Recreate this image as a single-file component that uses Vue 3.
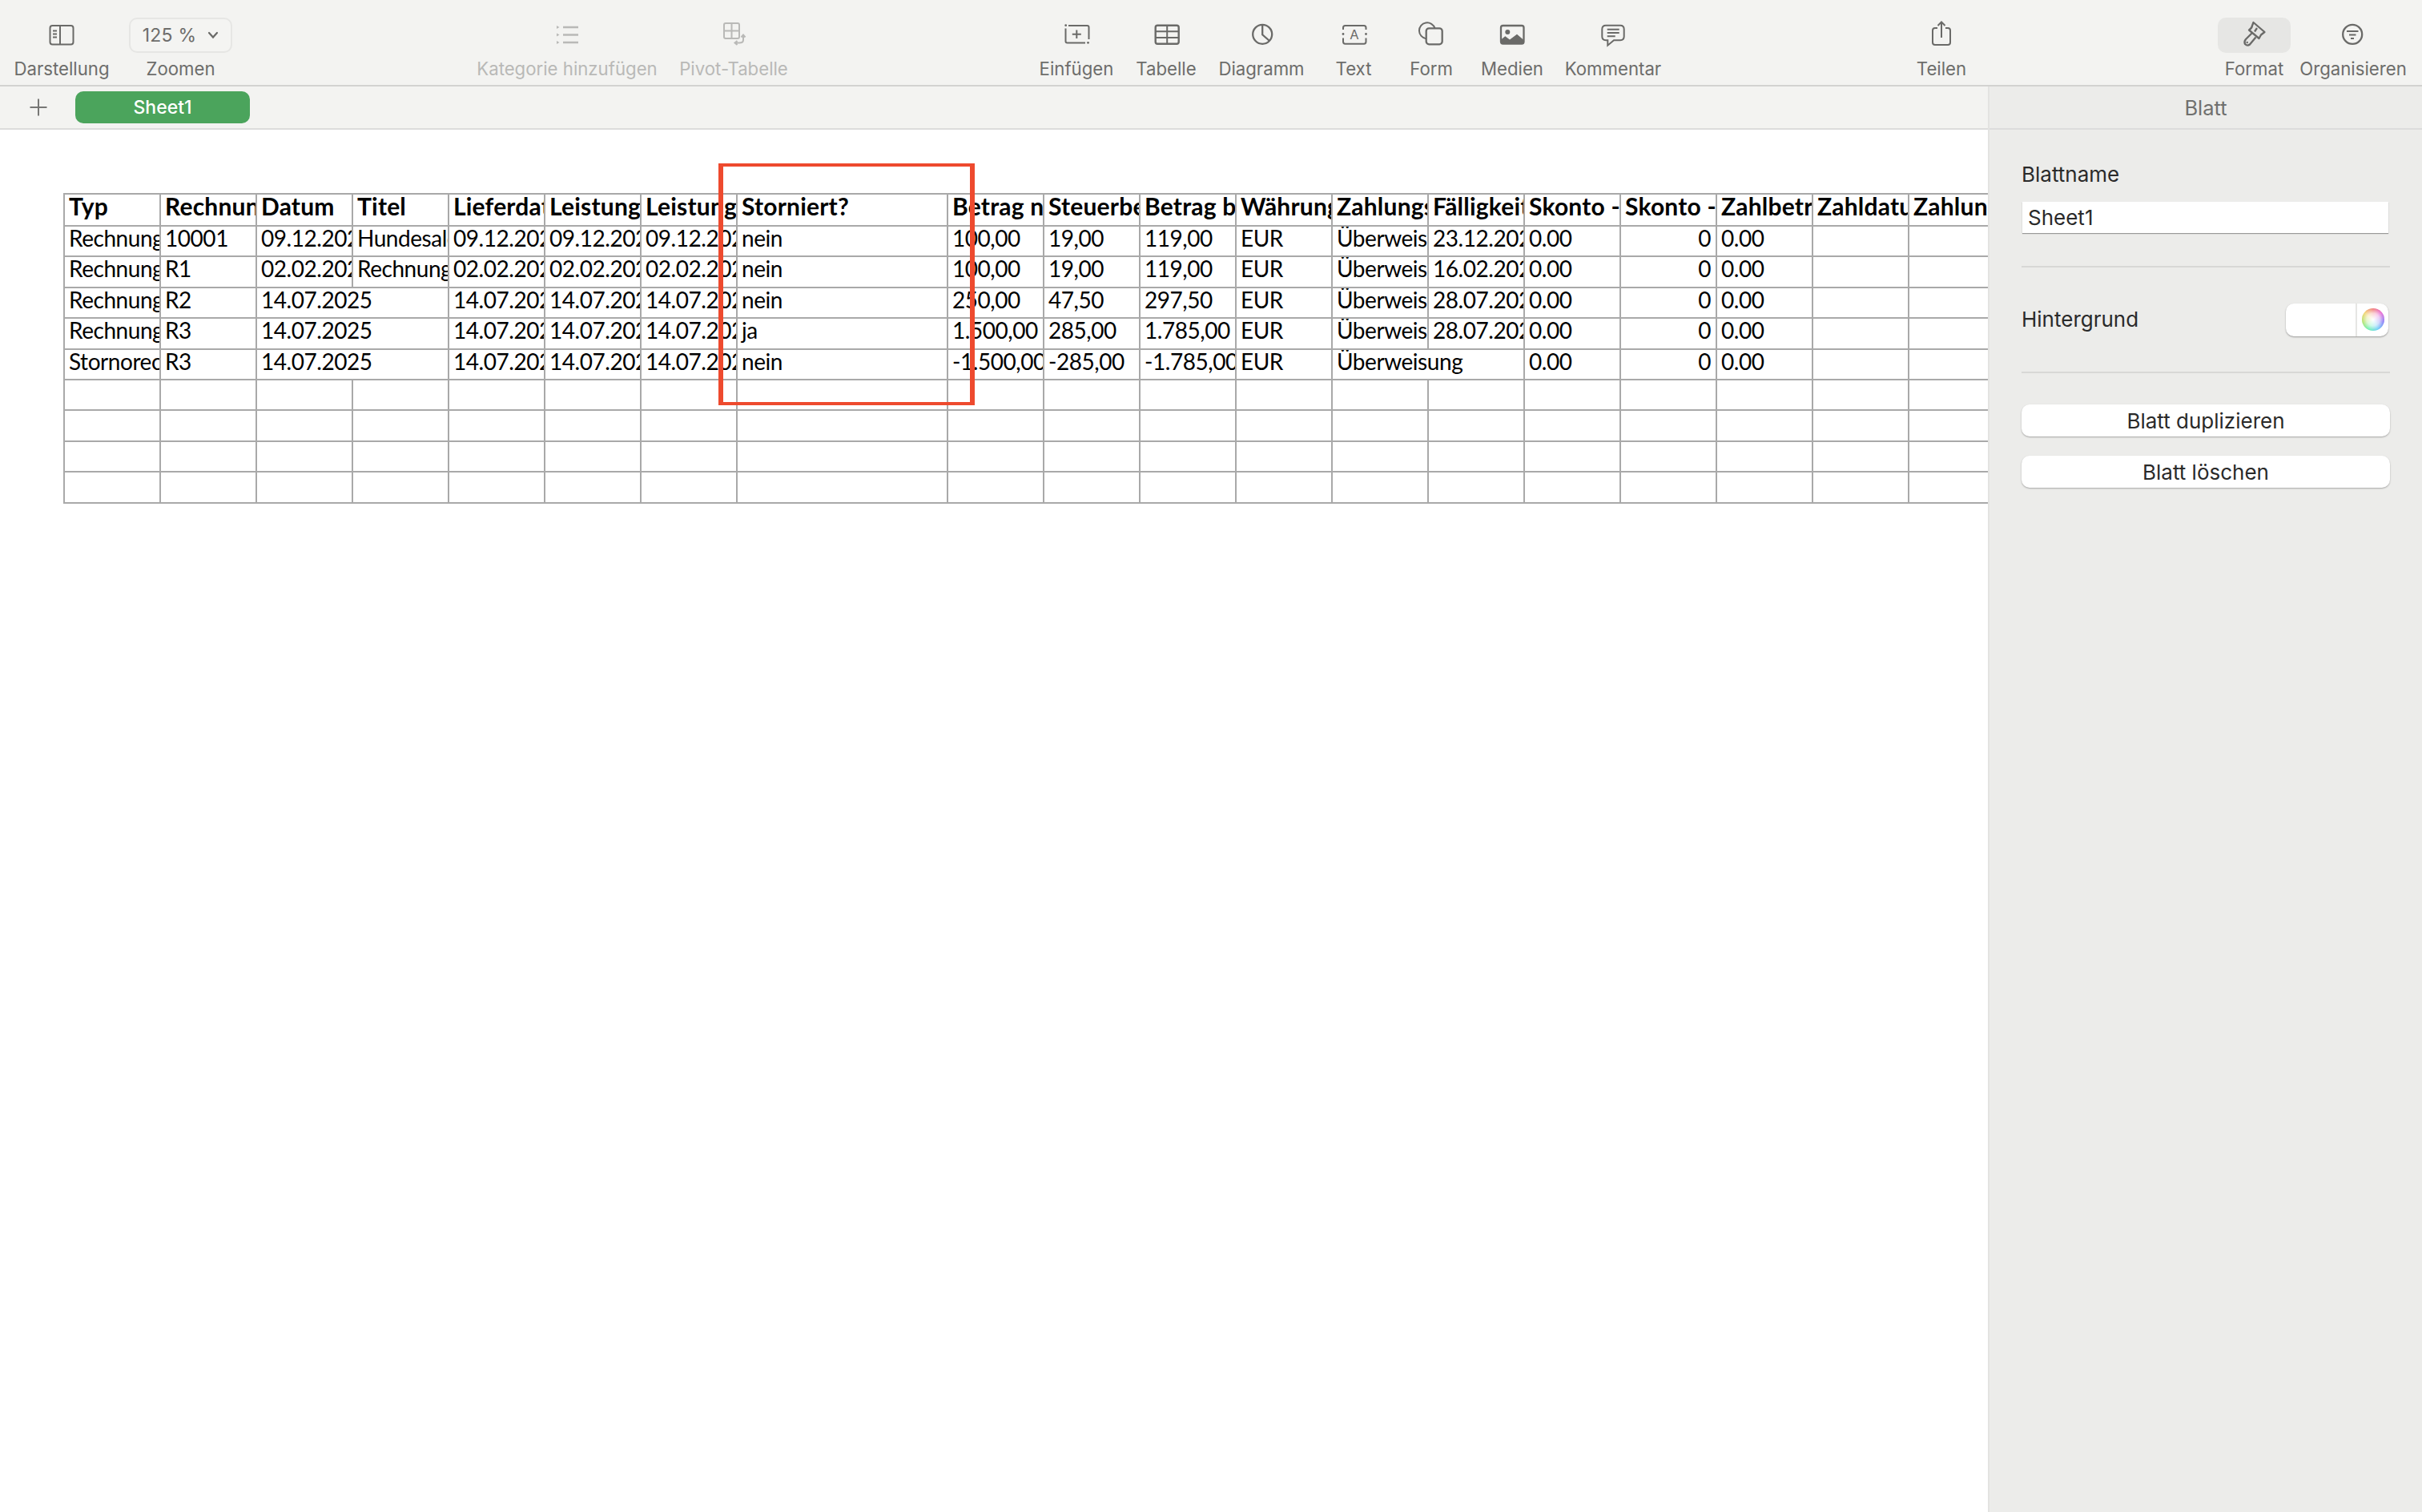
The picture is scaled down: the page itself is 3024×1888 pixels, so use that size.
<script setup>
/* TOOLBAR */

const leftGroup = [
  { label: "Darstellung", icon: "view", width: 118 },
  { label: "Zoomen", zoom: true, width: 129 },
];
const middleGroup = [
  { label: "Kategorie hinzufügen", icon: "category", width: 224, dim: true },
  { label: "Pivot-Tabelle", icon: "pivot", width: 192, dim: true },
];
const insertGroup = [
  { label: "Einfügen", icon: "insert", width: 120 },
  { label: "Tabelle", icon: "table", width: 104 },
  { label: "Diagramm", icon: "chart", width: 134 },
  { label: "Text", icon: "text", width: 96 },
  { label: "Form", icon: "shape", width: 98 },
  { label: "Medien", icon: "media", width: 104 },
  { label: "Kommentar", icon: "comment", width: 148 },
];
const shareGroup = [{ label: "Teilen", icon: "share", width: 120 }];
const rightGroup = [
  { label: "Format", icon: "format", width: 91, active: true },
  { label: "Organisieren", icon: "organize", width: 156 },
];

/* SHEET */

const header = [
  "Typ", "Rechnungsnummer", "Datum", "Titel", "Lieferdatum", "Leistungszeitraum",
  "Leistungszeitraum", "Storniert?", "Betrag netto", "Steuerbetrag", "Betrag brutto",
  "Währung", "Zahlungsart", "Fälligkeit", "Skonto - Prozent", "Skonto - Betrag",
  "Zahlbetrag", "Zahldatum", "Zahlungsstatus",
];

// null = the text of the cell before runs over this one
const data = [
  ["Rechnung", "10001", "09.12.2025", "Hundesalon", "09.12.2025", "09.12.2025", "09.12.2025", "nein", "100,00", "19,00", "119,00", "EUR", "Überweisung", "23.12.2025", "0.00", "0", "0.00", "", ""],
  ["Rechnung", "R1", "02.02.2025", "Rechnung", "02.02.2025", "02.02.2025", "02.02.2025", "nein", "100,00", "19,00", "119,00", "EUR", "Überweisung", "16.02.2025", "0.00", "0", "0.00", "", ""],
  ["Rechnung", "R2", "14.07.2025", null, "14.07.2025", "14.07.2025", "14.07.2025", "nein", "250,00", "47,50", "297,50", "EUR", "Überweisung", "28.07.2025", "0.00", "0", "0.00", "", ""],
  ["Rechnung", "R3", "14.07.2025", null, "14.07.2025", "14.07.2025", "14.07.2025", "ja", "1.500,00", "285,00", "1.785,00", "EUR", "Überweisung", "28.07.2025", "0.00", "0", "0.00", "", ""],
  ["Stornorechnung", "R3", "14.07.2025", null, "14.07.2025", "14.07.2025", "14.07.2025", "nein", "-1.500,00", "-285,00", "-1.785,00", "EUR", "Überweisung", null, "0.00", "0", "0.00", "", ""],
];

const emptyRow = Array(19).fill("");

function toCells(row) {
  return row
    .map((text, i) => ({ text, wide: row[i + 1] === null, right: i === 15 }))
    .filter((cell) => cell.text !== null);
}

const rows = [...data, emptyRow, emptyRow, emptyRow, emptyRow].map(toCells);
</script>

<template>
  <div class="app">
    <header class="toolbar">
      <div
        v-for="(group, g) in [leftGroup, middleGroup, insertGroup, shareGroup, rightGroup]"
        :key="g"
        class="group"
        :class="'group' + g"
      >
        <div
          v-for="item in group"
          :key="item.label"
          class="tool"
          :class="{ dim: item.dim }"
          :style="{ width: item.width + 'px' }"
        >
          <button v-if="item.zoom" class="zoomButton">
            125 %
            <svg width="14" height="10" viewBox="0 0 14 10" fill="none">
              <path d="M2 2L7 7.500L12 2" stroke="#6a6a68" stroke-width="2.200" stroke-linecap="round" />
            </svg>
          </button>
          <div v-else class="slot" :class="{ active: item.active }">
            <svg class="icon" width="44" height="44" viewBox="0 0 44 44" fill="none">
              <g v-if="item.icon === 'view'">
                <rect x="7.500" y="10" width="29" height="23.500" rx="3" />
                <path d="M20 10V33.500M11 16.500h5M11 20.500h5M11 24.500h5" />
              </g>
              <g v-else-if="item.icon === 'category'">
                <path d="M17 12H36M17 21.500H36M17 31H36" stroke-width="2.400" />
                <path d="M9 10l3.500 2L9 14zM9 19.500l3.500 2L9 23.500zM9 29l3.500 2L9 33z" class="solid" />
              </g>
              <g v-else-if="item.icon === 'pivot'">
                <rect x="10" y="7" width="19" height="19" rx="2" />
                <path d="M19.500 7V26M10 16.500H29" />
                <path d="M34 23V28Q34 31.500 29 31.500H24M31.500 24.500L34 21.500L36.500 24.500M26.500 29L23.500 31.500L26.500 34" />
              </g>
              <g v-else-if="item.icon === 'insert'">
                <path d="M12 10H35.500Q37.500 10 37.500 12V27M8.500 13.500V29.500Q8.500 31.500 10.500 31.500H33" />
                <circle cx="8.700" cy="9.700" r="1.400" class="solid" />
                <circle cx="36.500" cy="31.300" r="1.400" class="solid" />
                <path d="M22.300 15.500V26M16.800 20.700H27.800" />
              </g>
              <g v-else-if="item.icon === 'table'">
                <rect x="8.700" y="9.700" width="29" height="23" rx="2.500" stroke-width="2.400" />
                <path d="M8.700 17.300H37.700M8.700 25H37.700M23.200 9.700V32.700" />
              </g>
              <g v-else-if="item.icon === 'chart'">
                <circle cx="23.200" cy="20.800" r="12" stroke-width="2.300" />
                <path d="M23.200 9V21.300L32 29" stroke-width="2.300" />
              </g>
              <g v-else-if="item.icon === 'text'">
                <path d="M9 15V12.500Q9 10 11.500 10H35Q37.500 10 37.500 12.500V15M9 25.500V30Q9 32.700 11.500 32.700H35Q37.500 32.700 37.500 30V25.500" />
                <circle cx="9" cy="20.500" r="1.400" class="solid" />
                <circle cx="37.500" cy="20.500" r="1.400" class="solid" />
                <text x="23" y="27.300" class="iconLetter">A</text>
              </g>
              <g v-else-if="item.icon === 'shape'">
                <path d="M15.700 26.200A10 10 0 1 1 26.500 13.300" />
                <rect x="15.700" y="13.300" width="20" height="20" rx="3.500" stroke-width="2.300" />
              </g>
              <g v-else-if="item.icon === 'media'">
                <rect x="8" y="10" width="28.500" height="22.500" rx="2.500" stroke-width="2.300" />
                <path d="M8 32.500V27.500L13.300 23.300L19 27.500L28 20.700L36.500 28V32.500Z" class="solid" />
                <circle cx="16.300" cy="18" r="3" class="solid" />
              </g>
              <g v-else-if="item.icon === 'comment'">
                <path d="M13 9.700H31Q35.700 9.700 35.700 14.400V23.600Q35.700 28.300 31 28.300H23L15.300 34.700V28.300H13Q8.300 28.300 8.300 23.600V14.400Q8.300 9.700 13 9.700Z" />
                <path d="M14.700 14.700H29.700M14.700 19H29.700M14.700 23.300H24.700" />
              </g>
              <g v-else-if="item.icon === 'share'">
                <path d="M17 13H14Q11 13 11 16V31Q11 34 14 34H30Q33 34 33 31V16Q33 13 30 13H27" />
                <path d="M22 25V6M17.500 10L22 5.500L26.500 10" />
              </g>
              <g v-else-if="item.icon === 'format'" stroke-linejoin="round">
                <path d="M20.500 6L34.500 18L30 21.500L27.500 26L15 15.500Q18.500 13.500 19 10Z" stroke-width="2.300" />
                <path d="M25 13L22 17.500" stroke-width="2.300" />
                <path d="M19 19L11 27Q8.500 30 10 33Q13 36 16 33.500L23.500 24.500" stroke-width="2.300" />
                <circle cx="12.700" cy="31" r="1.200" class="solid" />
              </g>
              <g v-else-if="item.icon === 'organize'">
                <circle cx="21.200" cy="20.900" r="12" stroke-width="2.300" />
                <path d="M14 17H28.500M17 21.500H25.500M19 26H23" />
              </g>
            </svg>
          </div>
          <span class="toolLabel">{{ item.label }}</span>
        </div>
      </div>
    </header>

    <div class="body">
      <main class="content">
        <div class="tabBar">
          <button class="addSheet">
            <svg width="24" height="24" viewBox="0 0 24 24" fill="none">
              <path d="M12 1.500V22.500M1.500 12H22.500" stroke="#777775" stroke-width="2" />
            </svg>
          </button>
          <div class="tab">Sheet1</div>
        </div>

        <div class="canvas">
          <div class="sheet">
            <div v-for="(title, h) in header" :key="h" class="cell head">{{ title }}</div>
            <template v-for="(row, r) in rows" :key="r">
              <div
                v-for="(cell, c) in row"
                :key="c"
                class="cell"
                :class="{ wide: cell.wide, right: cell.right }"
              >{{ cell.text }}</div>
            </template>
          </div>
          <div class="marker"></div>
        </div>
      </main>

      <aside class="panel">
        <div class="panelTitle">Blatt</div>
        <div class="panelBody">
          <label class="fieldLabel">Blattname</label>
          <div class="nameInput">Sheet1</div>
          <div class="divider firstDivider"></div>
          <div class="bgRow">
            <span class="fieldLabel">Hintergrund</span>
            <div class="colorWell">
              <div class="swatch"></div>
              <div class="wheelBox"><div class="wheel"></div></div>
            </div>
          </div>
          <div class="divider"></div>
          <button class="panelButton">Blatt duplizieren</button>
          <button class="panelButton">Blatt löschen</button>
        </div>
      </aside>
    </div>
  </div>
</template>

<style>
html,
body {
  margin: 0;
  overflow: hidden;
  background: #fff;
}
</style>

<style scoped>
.app {
  width: 3024px;
  height: 1888px;
  display: flex;
  flex-direction: column;
  font-family: Inter, "Liberation Sans", sans-serif;
  overflow: hidden;
}

/* TOOLBAR */

.toolbar {
  flex: none;
  height: 108px;
  box-sizing: border-box;
  padding: 22px 8px 0 18px;
  display: flex;
  background: #f3f3f1;
  border-bottom: 2px solid #d2d2d0;
}

.group {
  display: flex;
}

.group0 {
  gap: 25px;
}

.group1 {
  margin-left: 306px;
}

.group2 {
  margin-left: 272px;
}

.group3 {
  margin-left: 276px;
}

.group4 {
  margin-left: 285px;
}

.tool {
  display: flex;
  flex-direction: column;
  align-items: center;
  color: #6d6d6b;
}

.tool.dim {
  color: #b9b9b7;
}

.slot {
  width: 100%;
  height: 44px;
  display: flex;
  justify-content: center;
  border-radius: 10px;
}

.slot.active {
  background: #e6e6e4;
}

.icon {
  stroke: #6a6a68;
  stroke-width: 2;
}

.dim .icon {
  stroke: #b9b9b7;
}

.solid {
  fill: #6a6a68;
  stroke: none;
}

.dim .solid {
  fill: #b9b9b7;
}

.iconLetter {
  font-family: Inter, sans-serif;
  font-size: 16.5px;
  text-anchor: middle;
  fill: #6a6a68;
  stroke: none;
}

.toolLabel {
  margin-top: 7px;
  font-size: 22.2px;
  line-height: 26px;
  white-space: nowrap;
  color: inherit;
}

.zoomButton {
  flex: none;
  width: 100%;
  height: 44px;
  box-sizing: border-box;
  display: flex;
  align-items: center;
  justify-content: center;
  gap: 14px;
  padding: 0;
  font-family: inherit;
  font-size: 23px;
  color: #6d6d6b;
  letter-spacing: 0.2px;
  background: #f4f4f2;
  border: 2px solid #e6e6e4;
  border-radius: 10px;
}

/* BODY */

.body {
  flex: 1;
  display: flex;
  min-height: 0;
}

.content {
  width: 2482px;
  flex: none;
  display: flex;
  flex-direction: column;
  min-height: 0;
}

.tabBar {
  flex: none;
  height: 54px;
  box-sizing: border-box;
  display: flex;
  align-items: flex-start;
  padding-top: 6px;
  padding-left: 36px;
  background: #f3f3f1;
  border-bottom: 2px solid #dcdcdc;
}

.addSheet {
  width: 24px;
  height: 40px;
  padding: 0;
  border: none;
  background: none;
  display: flex;
  align-items: center;
}

.tab {
  margin-left: 34px;
  width: 218px;
  height: 40px;
  display: flex;
  align-items: center;
  justify-content: center;
  font-size: 23px;
  font-weight: 500;
  color: #fff;
  background: #4ba45c;
  border-radius: 10px;
}

.canvas {
  position: relative;
  flex: 1;
  overflow: hidden;
  background: #fff;
  padding: 79px 0 0 79px;
}

/* SHEET */

.sheet {
  display: grid;
  width: max-content;
  grid-template-columns: repeat(7, 120px) 263px repeat(11, 120px);
  grid-template-rows: 40px repeat(9, 38.4px);
  border-top: 2px solid #a9a9a9;
  border-left: 2px solid #a9a9a9;
  font-family: Lato, "Liberation Sans", sans-serif;
  font-size: 28px;
  letter-spacing: -0.45px;
  line-height: 28px;
  color: #000;
}

.cell {
  box-sizing: border-box;
  min-width: 0;
  padding-left: 5px;
  white-space: nowrap;
  overflow: hidden;
  border-right: 2px solid #a9a9a9;
  border-bottom: 2px solid #a9a9a9;
}

.cell.head {
  font-size: 30px;
  font-weight: 700;
  letter-spacing: 0.2px;
}

.cell.wide {
  grid-column: span 2;
}

.cell.right {
  padding-right: 6px;
  text-align: right;
}

.marker {
  position: absolute;
  left: 897px;
  top: 42px;
  width: 320px;
  height: 302px;
  box-sizing: border-box;
  border-style: solid;
  border-color: #ee4a2e;
  border-width: 4px 6px;
}

/* SIDE PANEL */

.panel {
  flex: 1;
  display: flex;
  flex-direction: column;
  background: #ececea;
  border-left: 2px solid #e3e3e1;
  color: #2a2a2a;
}

.panelTitle {
  flex: none;
  height: 54px;
  box-sizing: border-box;
  display: flex;
  align-items: center;
  justify-content: center;
  font-size: 25.5px;
  color: #70706e;
  border-bottom: 2px solid #dcdcdc;
}

.panelBody {
  display: flex;
  flex-direction: column;
  padding: 40px 40px 0 40px;
}

.fieldLabel {
  font-size: 26px;
  line-height: 32px;
}

.nameInput {
  margin: 18px 2px 0 1px;
  height: 39px;
  padding-left: 7px;
  font-size: 26px;
  line-height: 40px;
  background: #fff;
  box-shadow: 0 1px 1px rgba(0, 0, 0, 0.35);
}

.divider {
  height: 2px;
  background: #d8d8d6;
}

.firstDivider {
  margin-top: 41px;
}

.bgRow {
  height: 130px;
  display: flex;
  align-items: center;
  justify-content: space-between;
  padding-right: 2px;
}

.colorWell {
  width: 128px;
  height: 41px;
  display: flex;
  background: #fff;
  border-radius: 10px;
  box-shadow: 0 1px 2px rgba(0, 0, 0, 0.35);
  overflow: hidden;
}

.swatch {
  width: 87px;
  border-right: 2px solid #e6e6e4;
}

.wheelBox {
  flex: 1;
  display: flex;
  align-items: center;
  justify-content: center;
}

.wheel {
  width: 28px;
  height: 28px;
  border-radius: 50%;
  background: radial-gradient(circle, #fff 0%, rgba(255, 255, 255, 0.7) 40%, rgba(255, 255, 255, 0) 75%),
    conic-gradient(#f06a6a, #e45ad0, #7a6cf5, #5ac8f5, #5cf0a8, #a8e05a, #f0d060, #f06a6a);
}

.panelButton {
  height: 40px;
  padding: 0;
  font-family: inherit;
  font-size: 26px;
  color: #2a2a2a;
  background: #fff;
  border: none;
  border-radius: 10px;
  box-shadow: 0 1px 2px rgba(0, 0, 0, 0.3);
}

.divider + .panelButton {
  margin-top: 39px;
}

.panelButton + .panelButton {
  margin-top: 24px;
}
</style>
